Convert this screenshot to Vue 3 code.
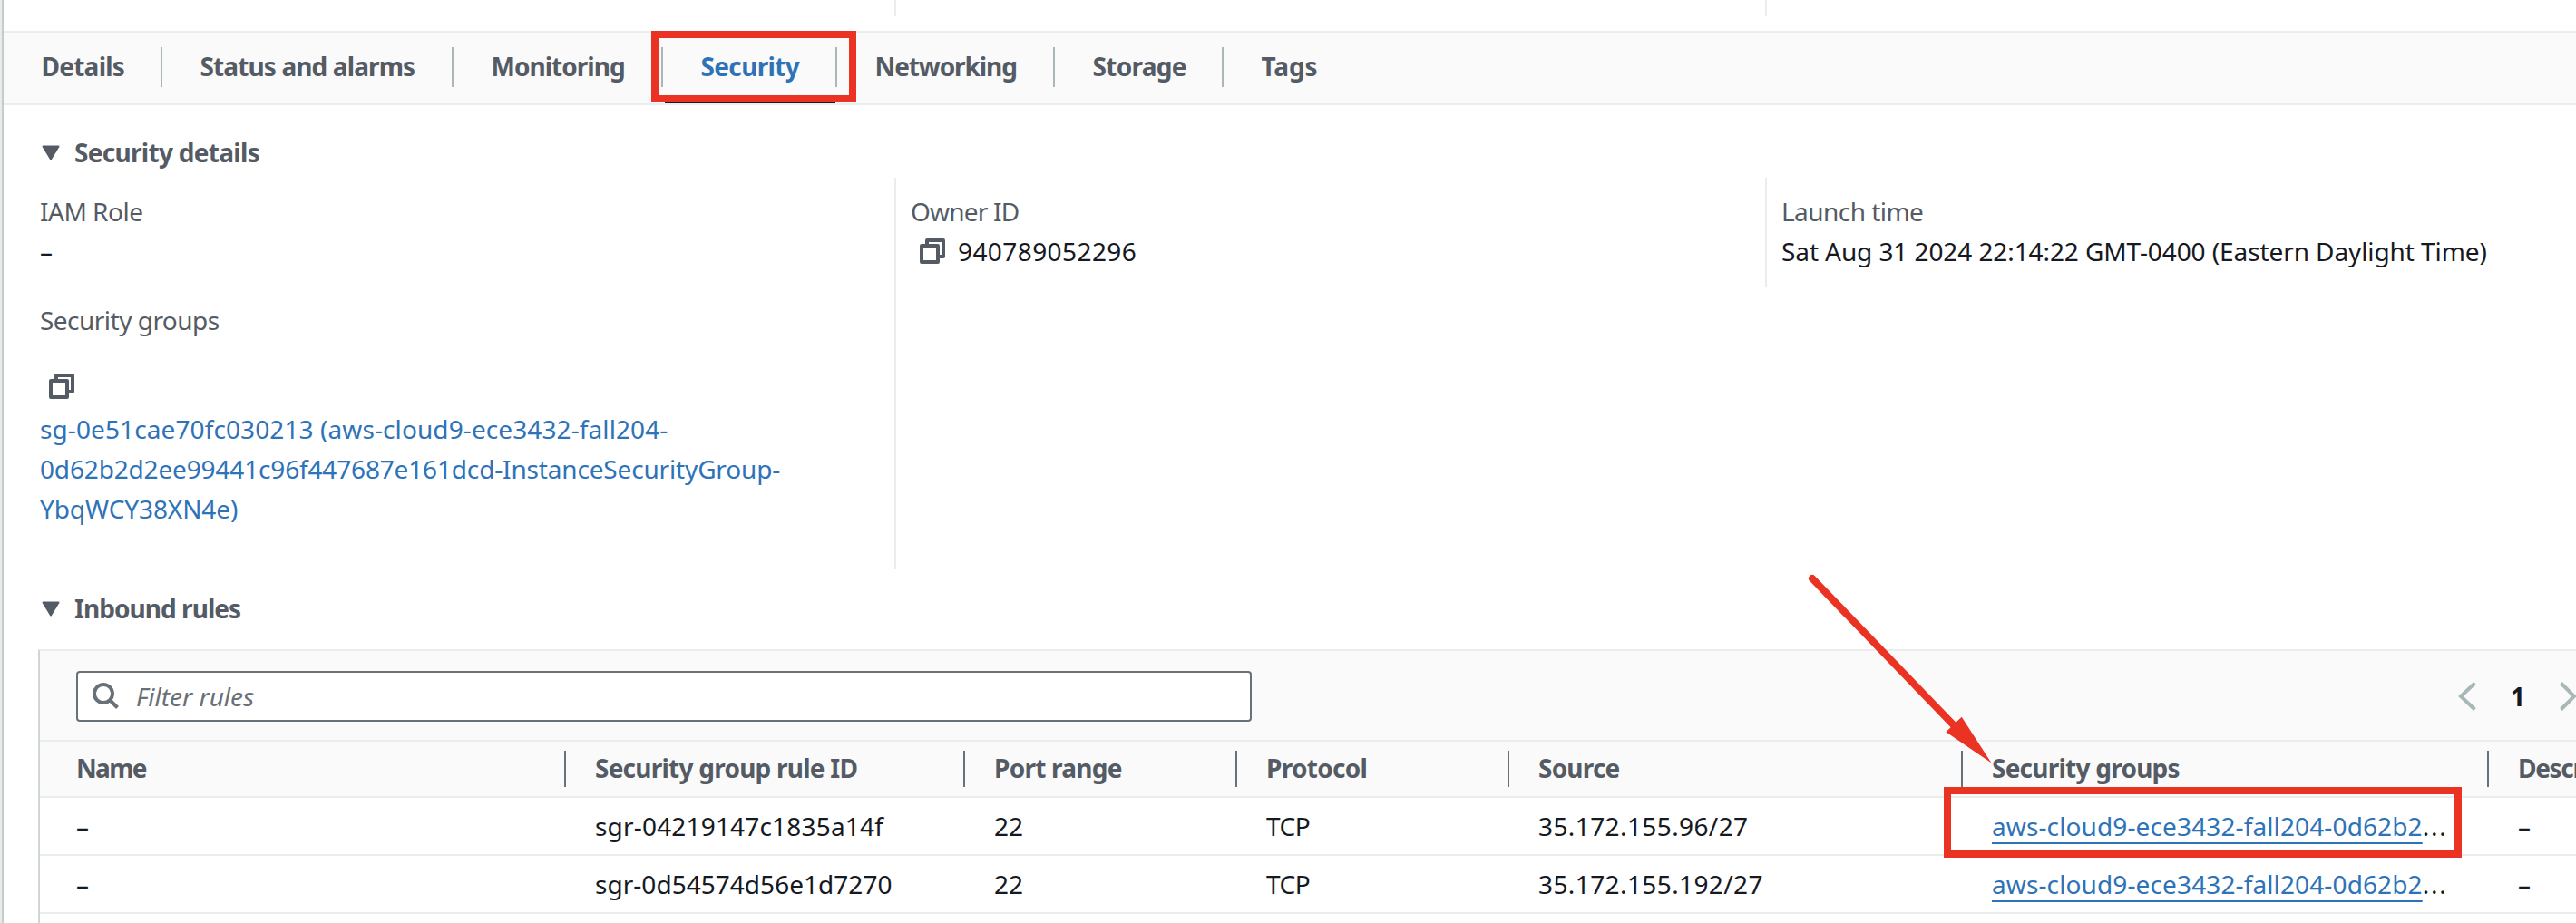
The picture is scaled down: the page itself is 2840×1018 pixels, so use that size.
<script setup>
const tabs = [
  { label: 'Details', width: 175, spacing: -0.75 },
  { label: 'Status and alarms', width: 321, spacing: -0.88 },
  { label: 'Monitoring', width: 231, spacing: -0.98 },
  { label: 'Security', width: 192, spacing: -0.65, active: true },
  { label: 'Networking', width: 240, spacing: -1.1 },
  { label: 'Storage', width: 186, spacing: -0.7 },
  { label: 'Tags', width: 160, spacing: -0.1, last: true },
]

const groupLines = [
  { text: 'sg-0e51cae70fc030213 (aws-cloud9-ece3432-fall204-', spacing: 0.1 },
  { text: '0d62b2d2ee99441c96f447687e161dcd-InstanceSecurityGroup-', spacing: -0.16 },
  { text: 'YbqWCY38XN4e)', spacing: -0.1 },
]

const columns = [
  { label: 'Name', spacing: -1.7 },
  { label: 'Security group rule ID', spacing: -0.76 },
  { label: 'Port range', spacing: -0.75 },
  { label: 'Protocol', spacing: -0.7 },
  { label: 'Source', spacing: -0.8 },
  { label: 'Security groups', spacing: -0.76 },
  { label: 'Description', spacing: -1.3 },
]

const rules = [
  { id: 'sgr-04219147c1835a14f', idSpacing: 0.18, source: '35.172.155.96/27' },
  { id: 'sgr-0d54574d56e1d7270', idSpacing: 0.03, source: '35.172.155.192/27' },
]

const ls = (v) => ({ letterSpacing: v + 'px' })
</script>

<template>
  <div class="page">
    <div class="above">
      <div class="above-col"></div>
      <div class="above-col"></div>
    </div>

    <nav class="tabs">
      <div
        v-for="t in tabs"
        :key="t.label"
        class="tab"
        :class="{ active: t.active, last: t.last }"
        :style="{ width: t.width + 'px' }"
      >
        <span :style="ls(t.spacing)">{{ t.label }}</span>
      </div>
    </nav>

    <h2 class="section">
      <svg class="caret" width="20" height="17" viewBox="0 0 20 17"><path d="M1.5 1.5h17L10 15.5z" /></svg>
      <span class="t-details">Security details</span>
    </h2>

    <div class="details">
      <div class="col first">
        <div class="label iam">IAM Role</div>
        <div class="value">–</div>
        <div class="label groups">Security groups</div>
        <div class="copy-line">
          <svg class="copy" width="28" height="28" viewBox="0 0 28 28"><path d="M8 7V2h18v18h-5" /><path d="M2 8h18v18H2z" /></svg>
        </div>
        <a class="sg-link">
          <span v-for="l in groupLines" :key="l.text" :style="ls(l.spacing)">{{ l.text }}</span>
        </a>
      </div>
      <div class="col second">
        <div class="label owner">Owner ID</div>
        <div class="value with-icon">
          <svg class="copy" width="28" height="28" viewBox="0 0 28 28"><path d="M8 7V2h18v18h-5" /><path d="M2 8h18v18H2z" /></svg>
          <span class="digits">940789052296</span>
        </div>
      </div>
      <div class="col third">
        <div class="label launch">Launch time</div>
        <div class="value time">Sat Aug 31 2024 22:14:22 GMT-0400 (Eastern Daylight Time)</div>
      </div>
    </div>

    <h2 class="section inbound">
      <svg class="caret" width="20" height="17" viewBox="0 0 20 17"><path d="M1.5 1.5h17L10 15.5z" /></svg>
      <span class="t-inbound">Inbound rules</span>
    </h2>

    <div class="table">
      <div class="toolbar">
        <div class="filter">
          <svg width="30" height="30" viewBox="0 0 30 30"><circle cx="12" cy="12" r="10" /><path d="M19 19l8.500 8.500" /></svg>
          <span>Filter rules</span>
        </div>
        <div class="pager">
          <svg width="22" height="32" viewBox="0 0 22 32"><path d="M20.500 1.500L5 16l15.500 14.500" /></svg>
          <b>1</b>
          <svg width="22" height="32" viewBox="0 0 22 32"><path d="M2.500 1.500L17 16 2.500 30.500" /></svg>
        </div>
      </div>
      <div class="grid head">
        <div v-for="c in columns" :key="c.label" class="th" :style="ls(c.spacing)">{{ c.label }}</div>
      </div>
      <div v-for="r in rules" :key="r.id" class="grid row">
        <div class="td">–</div>
        <div class="td" :style="ls(r.idSpacing)">{{ r.id }}</div>
        <div class="td">22</div>
        <div class="td tcp">TCP</div>
        <div class="td ip">{{ r.source }}</div>
        <div class="td"><a class="cell-link">aws-cloud9-ece3432-fall204-0d62b2</a><span class="dots">...</span></div>
        <div class="td">–</div>
      </div>
    </div>

    <div class="mark mark-tab"></div>
    <div class="mark mark-group"></div>
    <svg class="arrow" width="220" height="220" viewBox="0 0 220 220">
      <path class="shaft" d="M18 18L174 180" />
      <path class="tip" d="M182.700 170.700L215.500 221.500 165.300 187.300z" />
    </svg>
  </div>
</template>

<style>
body {
  margin: 0;
}
</style>

<style scoped>
.page {
  position: relative;
  box-sizing: border-box;
  width: 2840px;
  height: 1018px;
  overflow: hidden;
  padding-left: 4px;
  background: linear-gradient(to right, #e9ebeb 2px, #c6cbcb 2px, #c6cbcb 4px, #fff 4px);
  color: #16191f;
  font: 28px/44px 'Noto Sans', 'Open Sans', sans-serif;
  white-space: nowrap;
}
.page * {
  box-sizing: border-box;
}
.above {
  display: flex;
  height: 18px;
  margin-bottom: 16px;
}
.above-col {
  width: 984px;
  border-right: 2px solid #eaeded;
}
.above-col + .above-col {
  width: 960px;
}
.tabs {
  display: flex;
  height: 82px;
  background: #fafafa;
  border-top: 2px solid #eaeded;
  border-bottom: 2px solid #eaeded;
  font-weight: 700;
  color: #545b64;
}
.tab {
  height: 44px;
  margin-top: 16px;
  padding-left: 41.5px;
  border-right: 2px solid #aab7b8;
  line-height: 42px;
}
.tab.last {
  border-right: 0;
}
.tab.active {
  color: #2e73b8;
}
.section {
  display: flex;
  align-items: center;
  height: 44px;
  margin: 30px 0 0;
  padding-left: 42px;
  font-size: 28px;
  font-weight: 700;
  color: #545b64;
}
.caret {
  margin-right: 16px;
  fill: #545b64;
  stroke: #545b64;
  stroke-width: 2;
  stroke-linejoin: round;
}
.t-details {
  letter-spacing: -0.7px;
}
.t-inbound {
  letter-spacing: -0.95px;
}
.details {
  display: flex;
  align-items: flex-start;
  height: 432px;
  margin-top: 6px;
}
.col {
  padding-top: 15px;
}
.first {
  width: 984px;
  height: 432px;
  padding-left: 40px;
  border-right: 2px solid #eaeded;
}
.second {
  width: 960px;
  height: 120px;
  padding-left: 16px;
  border-right: 2px solid #eaeded;
}
.third {
  padding-left: 16px;
}
.label {
  color: #545b64;
}
.iam {
  letter-spacing: -0.5px;
}
.owner {
  letter-spacing: -0.8px;
}
.launch {
  letter-spacing: -0.55px;
}
.time {
  letter-spacing: -0.09px;
}
.groups {
  margin-top: 32px;
  letter-spacing: -0.52px;
}
.copy {
  fill: none;
  stroke: #545b64;
  stroke-width: 4;
  stroke-linejoin: round;
}
.copy-line {
  display: flex;
  align-items: flex-end;
  height: 76px;
  padding: 0 0 11px 10px;
}
.with-icon {
  display: flex;
  align-items: center;
  padding-left: 10px;
}
.digits {
  margin-left: 14px;
  letter-spacing: 0.42px;
}
.sg-link {
  display: flex;
  flex-direction: column;
  color: #2e73b8;
}
.inbound {
  margin-top: 21px;
}
.table {
  margin: 23px 0 0 38px;
  height: 320px;
  border-top: 2px solid #eaeded;
  border-left: 2px solid #d0d5d5;
}
.toolbar {
  display: flex;
  justify-content: space-between;
  height: 100px;
  padding: 22px 0 0 40px;
  background: #fafafa;
  border-bottom: 2px solid #eaeded;
}
.filter {
  display: flex;
  align-items: center;
  width: 1296px;
  height: 56px;
  padding-left: 16px;
  background: #fff;
  border: 2px solid #687078;
  border-radius: 4px;
  color: #687078;
  font-style: italic;
}
.filter svg {
  fill: none;
  stroke: #687078;
  stroke-width: 4;
}
.filter span {
  margin-left: 18px;
}
.pager {
  display: flex;
  align-items: center;
  height: 56px;
  margin-right: -3px;
}
.pager svg {
  fill: none;
  stroke: #aab7b8;
  stroke-width: 4;
}
.pager b {
  width: 16px;
  margin: 0 37px 0 38px;
}
.grid {
  display: grid;
  grid-template-columns: 580px 440px 300px 300px 500px 580px 96px;
}
.head {
  height: 62px;
  background: #fafafa;
  border-bottom: 2px solid #eaeded;
  font-weight: 700;
  color: #545b64;
}
.th {
  height: 40px;
  margin-top: 10px;
  padding-left: 32px;
  border-right: 2px solid #687078;
  line-height: 38px;
}
.td {
  padding-left: 32px;
  line-height: 62px;
}
.th:first-child,
.td:first-child {
  padding-left: 40px;
}
.th:last-child {
  border-right: 0;
  overflow: hidden;
}
.row {
  height: 64px;
  border-bottom: 2px solid #eaeded;
}
.tcp {
  letter-spacing: -0.5px;
}
.ip {
  letter-spacing: 0.4px;
}
.cell-link {
  color: #2e73b8;
  letter-spacing: 0.12px;
  text-decoration: underline;
  text-decoration-thickness: 2px;
  text-underline-offset: 7px;
  text-decoration-skip-ink: none;
}
.dots {
  letter-spacing: 1.8px;
}
.mark {
  position: absolute;
  border: 8px solid #ea3323;
}
.mark-tab {
  left: 718px;
  top: 34px;
  width: 226px;
  height: 79px;
}
.mark-tab::after {
  content: '';
  position: absolute;
  left: 7px;
  bottom: -9px;
  width: 188px;
  height: 1px;
  background: #16191f;
}
.mark-group {
  left: 2143px;
  top: 868px;
  width: 571px;
  height: 78px;
}
.arrow {
  position: absolute;
  left: 1980px;
  top: 620px;
  overflow: visible;
}
.shaft {
  stroke: #ea3323;
  stroke-width: 8;
  stroke-linecap: round;
}
.tip {
  fill: #ea3323;
}
</style>
